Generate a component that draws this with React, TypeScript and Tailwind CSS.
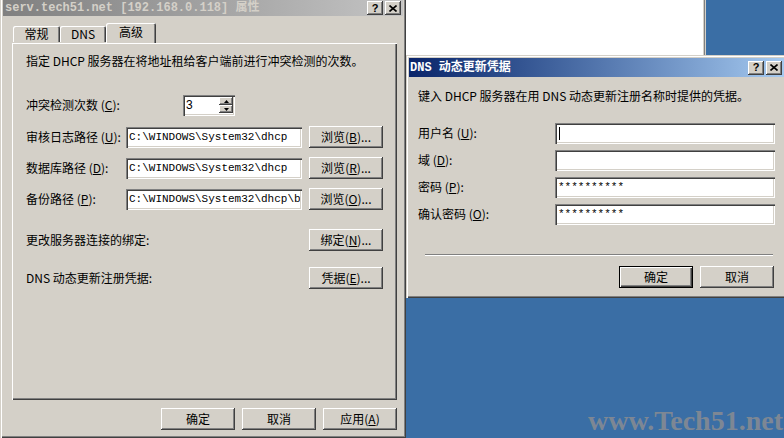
import React from 'react'

// classic 3D bevels
const raised = 'shadow-[inset_-1px_-1px_#404040,inset_1px_1px_#ffffff,inset_-2px_-2px_#808080]'
const sunken = 'shadow-[inset_1px_1px_#808080,inset_2px_2px_#404040,inset_-1px_-1px_#ffffff,inset_-2px_-2px_#d4d0c8]'
const frame = 'shadow-[inset_1px_1px_#d4d0c8,inset_2px_2px_#ffffff,inset_-1px_-1px_#404040,inset_-2px_-2px_#808080]'

const Key = ({ k }: { k: string }) => (
    <span>(<span className="underline">{k}</span>)</span>
)

const Btn = ({ children, def = false, className = '' }: { children: React.ReactNode; def?: boolean; className?: string }) => (
    <div
        className={`w-[74px] h-[22px] shrink-0 flex items-center justify-center bg-[#d4d0c8] ${
            def
                ? 'shadow-[inset_0_0_0_1px_#000000,inset_2px_2px_#ffffff,inset_-2px_-2px_#404040,inset_-3px_-3px_#808080]'
                : raised
        } ${className}`}
    >
        {children}
    </div>
)

const CaptionButtons = () => (
    <div className="ml-auto flex gap-[2px] items-center">
        <div className={`w-[16px] h-[14px] bg-[#d4d0c8] ${raised} flex items-center justify-center text-[11px] font-bold leading-none text-black font-['Liberation_Sans',sans-serif]`}>
            ?
        </div>
        <div className={`w-[16px] h-[14px] bg-[#d4d0c8] ${raised} flex items-center justify-center`}>
            <svg width="8" height="7" viewBox="0 0 8 7">
                <path d="M0.5 0.5 L7.5 6.5 M7.5 0.5 L0.5 6.5" stroke="#000" strokeWidth="1.6" />
            </svg>
        </div>
    </div>
)

const Field = ({ value, w, cursor = false }: { value?: string; w: string; cursor?: boolean }) => (
    <div className={`${w} h-[21px] shrink-0 bg-white ${sunken} flex items-center pl-[3px] pr-[2px] overflow-hidden`}>
        <div className="flex-1 overflow-hidden whitespace-nowrap font-['Liberation_Mono',monospace] text-[11px] text-black flex items-center">
            {cursor && <span className="w-[1px] h-[13px] bg-black ml-[1px]" />}
            {value}
        </div>
    </div>
)

const LeftDialog = () => {
    return (
        <div className="w-[406px] h-[438px] shrink-0 bg-[#d4d0c8] flex flex-col px-[3px] shadow-[inset_1px_0_#d4d0c8,inset_2px_0_#ffffff,inset_-1px_-1px_#404040,inset_-2px_-2px_#808080]">
            {/* title bar, window is inactive */}
            <div className="h-[16px] flex items-center bg-gradient-to-r from-[#808080] to-[#c4c4c4] pl-[2px] pr-[2px]">
                <span className="font-['Liberation_Mono','Noto_Sans_CJK_SC',monospace] font-bold text-[12px] leading-none text-[#d4d0c8] whitespace-nowrap">
                    serv.tech51.net [192.168.0.118] 属性
                </span>
                <CaptionButtons />
            </div>

            {/* tabs */}
            <div className="mt-[7px] ml-[10px] h-[19px] flex items-end">
                <div className="w-[47px] h-[16px] flex items-center justify-center rounded-t-[2px] shadow-[inset_1px_1px_#ffffff,inset_-1px_0_#404040,inset_-2px_0_#808080]">
                    常规
                </div>
                <div className="w-[46px] h-[16px] flex items-center justify-center rounded-t-[2px] shadow-[inset_1px_1px_#ffffff,inset_-1px_0_#404040,inset_-2px_0_#808080]">
                    DNS
                </div>
                <div className="relative z-10 -mb-[1px] w-[50px] h-[20px] pb-[2px] flex items-center justify-center bg-[#d4d0c8] rounded-t-[2px] shadow-[inset_1px_1px_#ffffff,inset_-1px_0_#404040,inset_-2px_0_#808080]">
                    高级
                </div>
            </div>

            {/* tab page */}
            <div className={`ml-[8px] w-[386px] h-[358px] flex flex-col pl-[15px] pr-[14px] ${frame}`}>
                <p className="mt-[12px] h-[14px] leading-[14px]">指定 DHCP 服务器在将地址租给客户端前进行冲突检测的次数。</p>

                <div className="mt-[26px] h-[22px] flex items-center">
                    <span className="w-[157px]">冲突检测次数 <Key k="C" />:</span>
                    <div className={`w-[52px] h-[21px] bg-white ${sunken} flex items-center pl-[3px] pr-[2px]`}>
                        <span className="flex-1 font-['Liberation_Sans',sans-serif] text-[12px]">3</span>
                        <div className="flex flex-col">
                            <div className={`w-[14px] h-[8px] bg-[#d4d0c8] ${raised} flex items-center justify-center`}>
                                <svg width="5" height="3" viewBox="0 0 5 3"><path d="M2.5 0 L5 3 L0 3 Z" fill="#000" /></svg>
                            </div>
                            <div className={`w-[14px] h-[8px] bg-[#d4d0c8] ${raised} flex items-center justify-center`}>
                                <svg width="5" height="3" viewBox="0 0 5 3"><path d="M0 0 L5 0 L2.5 3 Z" fill="#000" /></svg>
                            </div>
                        </div>
                    </div>
                </div>

                <div className="mt-[10px] h-[22px] flex items-center">
                    <span className="w-[100px]">审核日志路径 <Key k="U" />:</span>
                    <Field w="w-[176px]" value="C:\WINDOWS\System32\dhcp" />
                    <Btn className="ml-[7px]">浏览 <Key k="B" />...</Btn>
                </div>
                <div className="mt-[9px] h-[22px] flex items-center">
                    <span className="w-[100px]">数据库路径 <Key k="D" />:</span>
                    <Field w="w-[176px]" value="C:\WINDOWS\System32\dhcp" />
                    <Btn className="ml-[7px]">浏览 <Key k="R" />...</Btn>
                </div>
                <div className="mt-[9px] h-[22px] flex items-center">
                    <span className="w-[100px]">备份路径 <Key k="P" />:</span>
                    <Field w="w-[176px]" value="C:\WINDOWS\System32\dhcp\backup" />
                    <Btn className="ml-[7px]">浏览 <Key k="O" />...</Btn>
                </div>

                <div className="mt-[19px] h-[22px] flex items-center justify-between">
                    <span>更改服务器连接的绑定:</span>
                    <Btn>绑定 <Key k="N" />...</Btn>
                </div>
                <div className="mt-[16px] h-[22px] flex items-center justify-between">
                    <span>DNS 动态更新注册凭据:</span>
                    <Btn>凭据 <Key k="E" />...</Btn>
                </div>
            </div>

            <div className="mt-[8px] mr-[6px] flex justify-end gap-[7px]">
                <Btn className="h-[21px]">确定</Btn>
                <Btn className="h-[21px]">取消</Btn>
                <Btn className="h-[21px]">应用 <Key k="A" /></Btn>
            </div>
        </div>
    )
}

const CredentialsDialog = () => {
    const rows: { label: string; k: string; value?: string; cursor?: boolean }[] = [
        { label: '用户名', k: 'U', cursor: true },
        { label: '域', k: 'D' },
        { label: '密码', k: 'P', value: '**********' },
        { label: '确认密码', k: 'O', value: '**********' },
    ]
    return (
        <div className={`w-[381px] h-[243px] shrink-0 bg-[#d4d0c8] flex flex-col p-[3px] ${frame}`}>
            <div className="h-[19px] flex items-center bg-gradient-to-r from-[#0a246a] to-[#a6caf0] pl-[1px] pr-[2px]">
                <span className="font-['Liberation_Mono','Noto_Sans_CJK_SC',monospace] font-bold text-[12px] leading-none text-white whitespace-nowrap">
                    DNS 动态更新凭据
                </span>
                <CaptionButtons />
            </div>

            <div className="pl-[9px] flex flex-col">
                <p className="mt-[12px] h-[14px] leading-[14px]">键入 DHCP 服务器在用 DNS 动态更新注册名称时提供的凭据。</p>
                <div className="mt-[20px] flex flex-col gap-[7px]">
                    {rows.map((r) => (
                        <div key={r.k} className="h-[20px] flex items-center">
                            <span className="w-[137px]">
                                {r.label} <Key k={r.k} />:
                            </span>
                            <Field w="w-[220px]" value={r.value} cursor={r.cursor} />
                        </div>
                    ))}
                </div>
                <div className="mt-[30px] ml-[7px] w-[348px] h-[2px] border-t border-t-[#808080] border-b border-b-white" />
                <div className="mt-[10px] flex justify-end gap-[7px] pr-[10px]">
                    <Btn def className="h-[21px]">确定</Btn>
                    <Btn className="h-[21px]">取消</Btn>
                </div>
            </div>
        </div>
    )
}

export default function App() {
    return (
        <div className="w-[784px] h-[438px] overflow-hidden flex bg-[#3a6ea5] text-black text-[12px] leading-[14px] font-['Noto_Sans_CJK_SC',sans-serif]">
            <LeftDialog />
            <div className="flex-1 flex flex-col overflow-hidden">
                <div className="h-[55px] flex shrink-0">
                    <div className="w-[299px] bg-white shadow-[inset_-1px_0_#808080,inset_-2px_0_#d4d0c8]" />
                    <div className="flex-1 shadow-[inset_1px_0_#d4d0c8]" />
                </div>
                <CredentialsDialog />
                <div className="flex-1 flex items-end justify-end pb-[3px] pr-[1px]">
                    <span className="font-['Liberation_Serif',serif] font-bold text-[28px] leading-none text-[#7d8794] whitespace-nowrap">
                        www.Tech51.net
                    </span>
                </div>
            </div>
        </div>
    )
}
